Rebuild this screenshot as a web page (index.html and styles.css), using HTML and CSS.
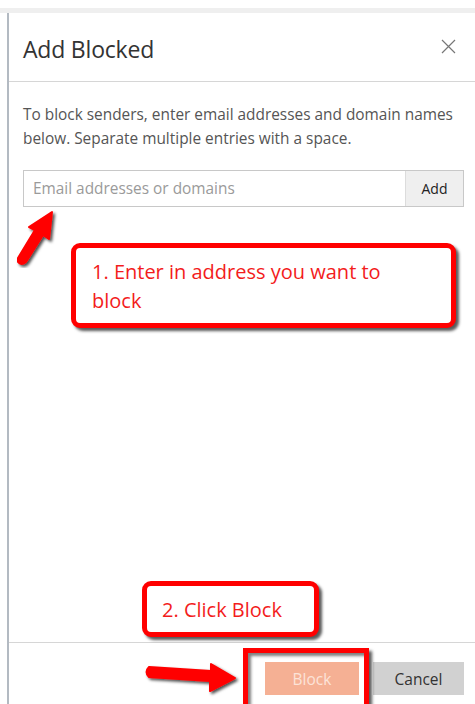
FILE: index.html
```html
<!DOCTYPE html>
<html lang="en">
<head>
<meta charset="utf-8">
<title>Add Blocked</title>
<link rel="stylesheet" href="styles.css">
</head>
<body>
<div class="topbar"></div>
<div class="dialog">
  <header class="dlg-head">
    <h1 class="dlg-title">Add Blocked</h1>
    <button class="dlg-close" aria-label="Close">
      <svg width="15" height="15" viewBox="0 0 15 15"><path d="M1 1L14 14M14 1L1 14" stroke="#777" stroke-width="1.2" fill="none"/></svg>
    </button>
  </header>
  <main class="dlg-body">
    <p class="dlg-text">To block senders, enter email addresses and domain names below. Separate multiple entries with a space.</p>
    <div class="entry">
      <input class="entry-input" type="text" placeholder="Email addresses or domains">
      <button class="entry-add">Add</button>
    </div>
  </main>
  <footer class="dlg-foot">
    <button class="btn btn-primary">Block</button>
    <button class="btn btn-secondary">Cancel</button>
  </footer>

  <!-- callouts drawn over the dialog -->
  <svg class="arrow arrow-up" width="50" height="70" viewBox="0 0 50 70">
    <defs>
      <filter id="sh1" x="-30%" y="-30%" width="160%" height="160%"><feDropShadow dx="2" dy="2" stdDeviation="1.5" flood-color="#000" flood-opacity="0.7"/></filter>
    </defs>
    <path d="M9 60 L26 32 L20 29 L43 14 L40 41 L34 37 L17 64 Q12 68 9 64 Z" fill="#f00" stroke="#f00" stroke-width="2" stroke-linejoin="round" filter="url(#sh1)"/>
  </svg>
  <div class="note note-one">1. Enter in address you want to block</div>
  <div class="note note-two">2. Click Block</div>
  <svg class="arrow arrow-right" width="100" height="40" viewBox="0 0 100 40">
    <defs>
      <filter id="sh2" x="-20%" y="-40%" width="140%" height="180%"><feDropShadow dx="2" dy="2" stdDeviation="1.5" flood-color="#000" flood-opacity="0.7"/></filter>
    </defs>
    <path d="M6 7 L68 11 L68 4 L92 18 L67 31 L67 21 L6 17 Q1 12 6 7 Z" fill="#f00" stroke="#f00" stroke-width="2" stroke-linejoin="round" filter="url(#sh2)"/>
  </svg>
  <div class="highlight"></div>
</div>
</body>
</html>
```

FILE: styles.css
```css
html, body {
  margin: 0;
  padding: 0;
  background: #fff;
  overflow: hidden;
}

body {
  padding-top: 8px;
  font-family: "Open Sans", "Noto Sans", sans-serif;
  color: #333;
}

.topbar {
  height: 5px;
  background: #efefef;
}

.dialog {
  position: relative;
  margin-left: 7px;
  height: 691px;
  border-left: 2px solid #b3bac2;
  display: flex;
  flex-direction: column;
}

.dlg-head {
  height: 68px;
  flex: none;
  border-bottom: 1px solid #d6d6d6;
  display: flex;
  align-items: center;
  justify-content: space-between;
  padding: 0 19px 0 14px;
}

.dlg-title {
  margin: 0;
  font-size: 23px;
  font-weight: 400;
  color: #333;
  letter-spacing: -0.2px;
  position: relative;
  top: 2px;
}

.dlg-close {
  border: 0;
  background: none;
  padding: 0;
  display: flex;
  position: relative;
  top: -1px;
}

.dlg-body {
  flex: 1;
  padding: 21px 11px 0 14px;
}

.dlg-text {
  margin: 0;
  font-size: 15.4px;
  line-height: 24px;
  color: #555;
}

.entry {
  margin-top: 19px;
  height: 37px;
  display: flex;
  border: 1px solid #c8c8c8;
  box-sizing: border-box;
}

.entry-input {
  flex: 1;
  border: 0;
  padding: 0 9px;
  font-family: inherit;
  font-size: 15.4px;
  color: #333;
  outline: none;
  min-width: 0;
}

.entry-input::placeholder {
  color: #9a9a9a;
}

.entry-add {
  width: 58px;
  border: 0;
  border-left: 1px solid #dcdcdc;
  background: #efefef;
  font-family: inherit;
  font-size: 14px;
  color: #222;
  padding: 0;
}

.dlg-foot {
  height: 62px;
  flex: none;
  box-sizing: border-box;
  border-top: 1px solid #d6d6d6;
  display: flex;
  align-items: flex-start;
  justify-content: flex-end;
  gap: 14px;
  padding: 19px 11px 0 0;
}

.btn {
  height: 33px;
  border: 0;
  font-family: inherit;
  font-size: 15.5px;
  padding: 0;
}

.btn-primary {
  width: 94px;
  background: #f5b094;
  color: #fce3d8;
}

.btn-secondary {
  width: 91px;
  background: #d1d1d1;
  color: #333;
}

/* callouts */
.note {
  position: absolute;
  box-sizing: border-box;
  background: #fff;
  border: 5px solid #f00;
  border-radius: 9px;
  box-shadow: 3px 3px 3px rgba(0, 0, 0, 0.65);
  color: #f31c1c;
  font-size: 20px;
  line-height: 29px;
}

.note-one {
  left: 62px;
  top: 230px;
  width: 385px;
  height: 85px;
  padding: 9px 40px 0 16px;
}

.note-two {
  left: 133px;
  top: 568px;
  width: 177px;
  height: 56px;
  padding: 9px 10px 0 15px;
}

.arrow {
  position: absolute;
}

.arrow-up {
  left: 0;
  top: 185px;
}

.arrow-right {
  left: 134px;
  top: 647px;
}

.highlight {
  position: absolute;
  left: 234px;
  top: 635px;
  width: 126px;
  height: 70px;
  box-sizing: border-box;
  border: 5px solid #f00;
  box-shadow: 3px 3px 3px rgba(0, 0, 0, 0.65), inset 3px 3px 3px rgba(0, 0, 0, 0.5);
}
```
